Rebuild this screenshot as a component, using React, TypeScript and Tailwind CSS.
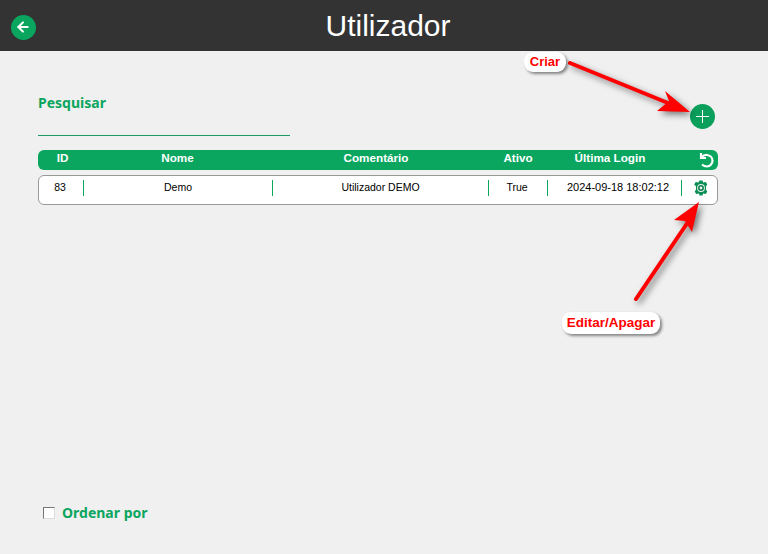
import React from 'react';
import { ArrowLeft } from 'lucide-react';

const GREEN = 'bg-[#0aa65f]';

const GearIcon: React.FC = () => (
  <svg width="16" height="16" viewBox="0 0 16 16" fill="none">
    <path d="M6.500.6h3l.6 1.900 2.700-.5 1.500 2.600-1.300 1.600v3.600l1.300 1.600-1.500 2.600-2.700-.5-.6 1.900h-3l-.6-1.900-2.700.5-1.500-2.600 1.300-1.600V6.200L1.200 4.600 2.700 2l2.700.5z" fill="#0b8f55" />
    <circle cx="8" cy="8" r="3.900" fill="#eaf6f0" />
    <circle cx="8" cy="8" r="2.200" stroke="#0b7a49" strokeWidth="1.500" />
  </svg>
);

const UndoIcon: React.FC = () => (
  <svg width="15" height="16" viewBox="0 0 15 16" fill="none" stroke="#fff" strokeWidth="2.200">
    <path d="M2 1v5h5" />
    <path d="M2.500 5.500C4 3.500 6 2.800 8 3c3 .3 5.500 2.400 5.500 5.700S11 14.500 8 14.500c-2 0-3.500-.6-5-2" />
  </svg>
);

const Arrows: React.FC = () => (
  <svg
    className="absolute left-0 top-0 pointer-events-none [filter:drop-shadow(3px_3px_3px_rgba(0,0,0,0.5))]"
    width="768"
    height="554"
    viewBox="0 0 768 554"
  >
    <path d="M570 63L668 103" stroke="#ff0000" strokeWidth="4" strokeLinecap="round" />
    <path d="M690 112L665 91L669 101L657 111z" fill="#ff0000" />
    <path d="M636 299L688 222" stroke="#ff0000" strokeWidth="4" strokeLinecap="round" />
    <path d="M699 202L674 220L685 221L692 232z" fill="#ff0000" />
  </svg>
);

const Callout: React.FC<{ label: string; className: string }> = ({ label, className }) => (
  <div
    className={`absolute flex items-center justify-center bg-white rounded-[9px] text-[#ff0000] font-bold shadow-[2px_2px_3px_rgba(0,0,0,0.45)] ${className}`}
  >
    {label}
  </div>
);

export default function App() {
  return (
    <div className="relative w-[768px] h-[554px] overflow-hidden bg-[#f0f0f0] font-['Liberation_Sans',Arial,sans-serif]">
      <header className="relative flex items-center justify-center h-[51px] pl-[8px] bg-[#333333]">
        <button className="absolute left-[11px] top-[15px] flex items-center justify-center w-[25px] h-[25px] rounded-full bg-[#0aa65f] text-white">
          <ArrowLeft size={16} strokeWidth={3} className="-ml-[2px] -mt-[2px]" />
        </button>
        <h1 className="text-[30px] leading-none text-white">Utilizador</h1>
      </header>

      <main className="flex flex-col h-[503px] pl-[38px] pr-[50px]">
        <div className="flex justify-between pt-[44px]">
          <div className="w-[252px]">
            <label className="block h-[40px] font-['Noto_Sans',sans-serif] text-[14px] leading-4 font-bold text-[#0aa65f]">
              Pesquisar
            </label>
            <div className="h-px bg-[#1a9c60]" />
          </div>
          <button className="flex items-center justify-center w-[25px] h-[25px] mt-[9px] mr-[3px] rounded-full bg-[#0a9f5b] text-white">
            <svg width="13" height="13" viewBox="0 0 13 13" stroke="#fff" strokeWidth="1">
              <path d="M6.500 0v13M0 6.500h13" />
            </svg>
          </button>
        </div>

        <div className={`flex items-center h-[20px] mt-[14px] rounded-[6px] ${GREEN} text-white text-[11.7px] font-bold`}>
          <span className="w-[49px] text-center -mt-[4px]">ID</span>
          <span className="w-[181px] text-center -mt-[4px]">Nome</span>
          <span className="w-[216px] text-center -mt-[4px]">Comentário</span>
          <span className="w-[68px] text-center -mt-[4px]">Ativo</span>
          <span className="w-[116px] text-center -mt-[4px]">Última Login</span>
          <span className="flex flex-1 justify-end pr-[4px] -mt-[1px]">
            <UndoIcon />
          </span>
        </div>

        <div className="flex items-start h-[30px] mt-[5px] pt-[4px] bg-white border border-[#999999] rounded-[6px] text-[10.5px] leading-[16px] text-black">
          <span className="w-[45px] h-[16px] pr-[2px] text-center border-r border-[#0aa65f]">
            <span className="relative -top-px">83</span>
          </span>
          <span className="w-[189px] h-[16px] text-center border-r border-[#0aa65f]">
            <span className="relative -top-px">Demo</span>
          </span>
          <span className="w-[216px] h-[16px] text-center border-r border-[#0aa65f]">
            <span className="relative -top-px">Utilizador DEMO</span>
          </span>
          <span className="w-[59px] h-[16px] pr-[2px] text-center border-r border-[#0aa65f]">
            <span className="relative -top-px">True</span>
          </span>
          <span className="w-[134px] h-[16px] pl-[7px] text-center text-[11px] border-r border-[#0aa65f]">
            <span className="relative -top-px">2024-09-18 18:02:12</span>
          </span>
          <span className="flex flex-1 justify-center pl-[3px]">
            <GearIcon />
          </span>
        </div>

        <label className="flex items-center gap-[7px] mt-auto mb-[31px] ml-[5px] font-['Noto_Sans',sans-serif] text-[14px] font-bold text-[#0aa65f]">
          <span className="w-[12px] h-[12px] bg-white border border-[#777777] border-r-[#dddddd] border-b-[#dddddd]" />
          Ordenar por
        </label>
      </main>

      <Arrows />
      <Callout label="Criar" className="left-[524px] top-[52px] w-[42px] h-[20px] text-[13px]" />
      <Callout label="Editar/Apagar" className="left-[562px] top-[312px] w-[98px] h-[22px] text-[13.500px]" />
    </div>
  );
}
